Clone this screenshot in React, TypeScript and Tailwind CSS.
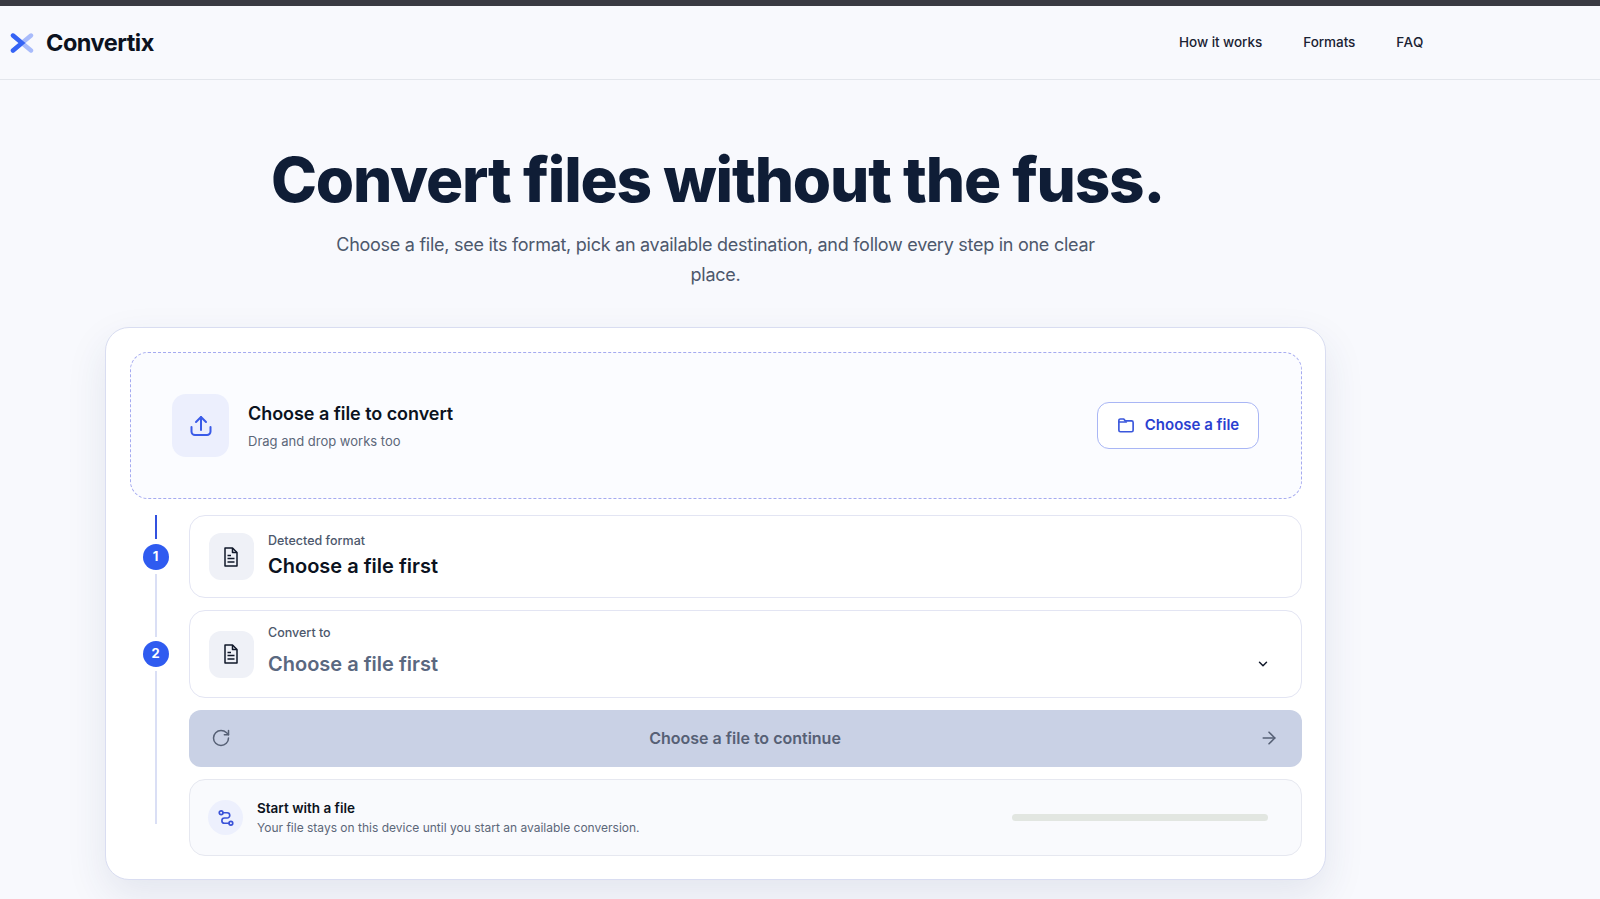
import { ArrowRight, ChevronDown, RotateCw } from 'lucide-react';

function Logo() {
  return (
    <svg viewBox="0 0 24 20" className="h-[20px] w-[24px]" fill="none" strokeWidth="4.4" strokeLinecap="round">
      <path d="M3 2.5 L21 17.5" stroke="#a8bbfb" />
      <path d="M21 2.5 L3 17.5" stroke="#a8bbfb" />
      <path d="M3 2.5 L12 10 L3 17.5" stroke="#3563f5" />
    </svg>
  );
}

function UploadIcon() {
  return (
    <svg viewBox="0 0 24 24" className="h-[24px] w-[24px] text-[#3a5be8]" fill="none" stroke="currentColor" strokeWidth="2" strokeLinecap="round" strokeLinejoin="round">
      <path d="M12 16V3" />
      <path d="M7 8l5-5 5 5" />
      <path d="M2.5 13v4.5a3.5 3.5 0 0 0 3.5 3.5h12a3.5 3.5 0 0 0 3.5-3.5V13" />
    </svg>
  );
}

function FolderIcon() {
  return (
    <svg viewBox="0 0 24 24" className="-mt-[1px] h-[18px] w-[18px] text-[#3a57dc]" fill="none" stroke="currentColor" strokeWidth="2.2" strokeLinecap="round" strokeLinejoin="round">
      <path d="M2.5 6a2 2 0 0 1 2-2h4.5l2 2.5h8.500a2 2 0 0 1 2 2V19a2 2 0 0 1-2 2h-15a2 2 0 0 1-2-2Z" />
      <path d="M2.500 8h10" />
    </svg>
  );
}

function DocIcon() {
  return (
    <svg viewBox="0 0 14 20" className="h-[20px] w-[14px] text-[#10182a]" fill="none" stroke="currentColor" strokeWidth="1.5" strokeLinejoin="round">
      <path d="M1 1H8.500L13 5.500V19H1Z" />
      <path d="M8.500 1V5.500H13" />
      <path d="M3.500 8.500H7M3.500 11.500H10.500M3.500 15H10.500" />
    </svg>
  );
}

function RouteIcon() {
  return (
    <svg viewBox="0 0 24 24" className="h-[18px] w-[18px] text-[#3a52d8]" fill="none" stroke="currentColor" strokeWidth="2.200" strokeLinecap="round">
      <circle cx="5.500" cy="5" r="2.500" />
      <circle cx="18.500" cy="19" r="2.500" />
      <path d="M8 5H13.500a3.500 3.500 0 0 1 0 7H10a3.500 3.500 0 0 0 0 7H16" />
    </svg>
  );
}

function StepBadge({ n }: { n: number }) {
  return (
    <span className="flex h-[26px] w-[26px] shrink-0 items-center justify-center rounded-full bg-[#2f5bf0] text-[13px] font-bold text-white">
      {n}
    </span>
  );
}

function Rail() {
  return (
    <div className="mr-[8px] flex h-[309px] w-[51px] shrink-0 flex-col items-center">
      <span className="h-[24px] w-[2px] bg-[#3251df]" />
      <span className="h-[5px]" />
      <StepBadge n={1} />
      <span className="my-[4px] h-[63px] w-[2px] bg-[#dadff5]" />
      <StepBadge n={2} />
      <span className="mt-[4px] w-[2px] flex-1 bg-[#dadff5]" />
    </div>
  );
}

export default function App() {
  return (
    <div className="h-[899px] overflow-hidden bg-[#f8f9fd] font-['Inter',sans-serif] text-[#0b1220]">
      <div className="h-[6px] bg-[#3a3a42]" />
      <header className="flex h-[74px] items-center justify-between border-b border-[#e3e6ec] pl-[10px] pr-[176px]">
        <div className="flex items-center gap-[12px]">
          <Logo />
          <span className="text-[23.500px] font-bold tracking-[-0.5px]">Convertix</span>
        </div>
        <nav className="flex items-center gap-[41px] text-[13.500px] font-medium tracking-[-0.05px] text-[#1a2233]">
          <a>How it works</a>
          <a>Formats</a>
          <a className="tracking-[0.5px]">FAQ</a>
        </nav>
      </header>

      <main className="ml-[105px] w-[1221px] pt-[64px]">
        <h1 className="pl-[4px] text-center text-[62px] font-extrabold leading-[72px] tracking-[-1.200px] text-[#0f1d36]">
          Convert files without the fuss.
        </h1>
        <p className="mx-auto mt-[14px] w-[770px] text-center text-[18px] leading-[30px] tracking-[-0.270px] text-[#4d586c]">
          Choose a file, see its format, pick an available destination, and follow every step in one clear place.
        </p>

        <section className="mt-[37px] h-[553px] rounded-[24px] border border-[#d9ddf1] bg-white py-[24px] pl-[24px] pr-[23px] shadow-[0_16px_40px_rgba(40,55,110,0.10)]">
          <div className="flex h-[147px] items-center justify-between rounded-[18px] border border-dashed border-[#a5aaf0] bg-[#fbfcff] pl-[41px] pr-[42px]">
            <div className="flex items-center gap-[19px]">
              <span className="flex h-[63px] w-[57px] items-center justify-center rounded-[14px] bg-[#eceffd]">
                <UploadIcon />
              </span>
              <div className="pt-[1px]">
                <div className="text-[18px] font-semibold leading-[26px] tracking-[-0.050px] text-[#0b1220]">Choose a file to convert</div>
                <div className="mt-[4px] text-[13px] leading-[20px] text-[#5c6779]">Drag and drop works too</div>
              </div>
            </div>
            <button className="flex h-[47px] w-[162px] items-center justify-center gap-[10px] rounded-[12px] border border-[#a9b6f5] bg-white text-[15px] font-semibold text-[#2a3fd0]">
              <FolderIcon />
              Choose a file
            </button>
          </div>

          <div className="mt-[16px] flex">
            <Rail />
            <div className="flex flex-1 flex-col gap-[12px]">
              <div className="flex h-[83px] items-center gap-[14px] rounded-[16px] border border-[#e3e5f3] bg-white pl-[19px]">
                <span className="flex h-[47px] w-[45px] items-center justify-center rounded-[12px] bg-[#eff1f7] pr-[1px]">
                  <DocIcon />
                </span>
                <div>
                  <div className="text-[12.500px] font-medium leading-[16px] text-[#4d586c]">Detected format</div>
                  <div className="mt-[3px] text-[20px] font-semibold leading-[28px] text-[#0b1220]">Choose a file first</div>
                </div>
              </div>

              <div className="flex h-[88px] items-center gap-[14px] rounded-[16px] border border-[#e3e5f3] bg-white pl-[19px] pr-[31px]">
                <span className="flex h-[47px] w-[45px] items-center justify-center rounded-[12px] bg-[#eff1f7] pr-[1px]">
                  <DocIcon />
                </span>
                <div className="flex-1 pb-[6px]">
                  <div className="text-[12.500px] font-medium leading-[16px] text-[#4d586c]">Convert to</div>
                  <div className="mt-[9px] flex items-center justify-between">
                    <span className="text-[20px] font-semibold leading-[28px] text-[#5a6880]">Choose a file first</span>
                    <ChevronDown className="h-[14px] w-[14px] text-[#10182a]" strokeWidth={2.5} />
                  </div>
                </div>
              </div>

              <button className="flex h-[57px] items-center justify-between rounded-[12px] bg-[#c9d1e5] pb-[1px] pl-[22px] pr-[23px] text-[16px] font-semibold text-[#566075]">
                <RotateCw className="h-[20px] w-[20px] text-[#566075]" strokeWidth={1.8} />
                <span>Choose a file to continue</span>
                <ArrowRight className="h-[20px] w-[20px] text-[#566075]" strokeWidth={1.8} />
              </button>

              <div className="flex h-[77px] items-center justify-between rounded-[16px] border border-[#e6e8f0] bg-[#f9fafd] pl-[18px] pr-[33px]">
                <div className="flex items-center gap-[14px]">
                  <span className="flex h-[35px] w-[35px] items-center justify-center rounded-full bg-[#edf0fd]">
                    <RouteIcon />
                  </span>
                  <div>
                    <div className="text-[13.500px] font-semibold leading-[18px] text-[#0b1220]">Start with a file</div>
                    <div className="mt-[2px] text-[12px] leading-[18px] text-[#5c6779]">
                      Your file stays on this device until you start an available conversion.
                    </div>
                  </div>
                </div>
                <div className="mb-[1px] h-[7px] w-[256px] rounded-full bg-[#e2e6e1]" />
              </div>
            </div>
          </div>
        </section>
      </main>
    </div>
  );
}
